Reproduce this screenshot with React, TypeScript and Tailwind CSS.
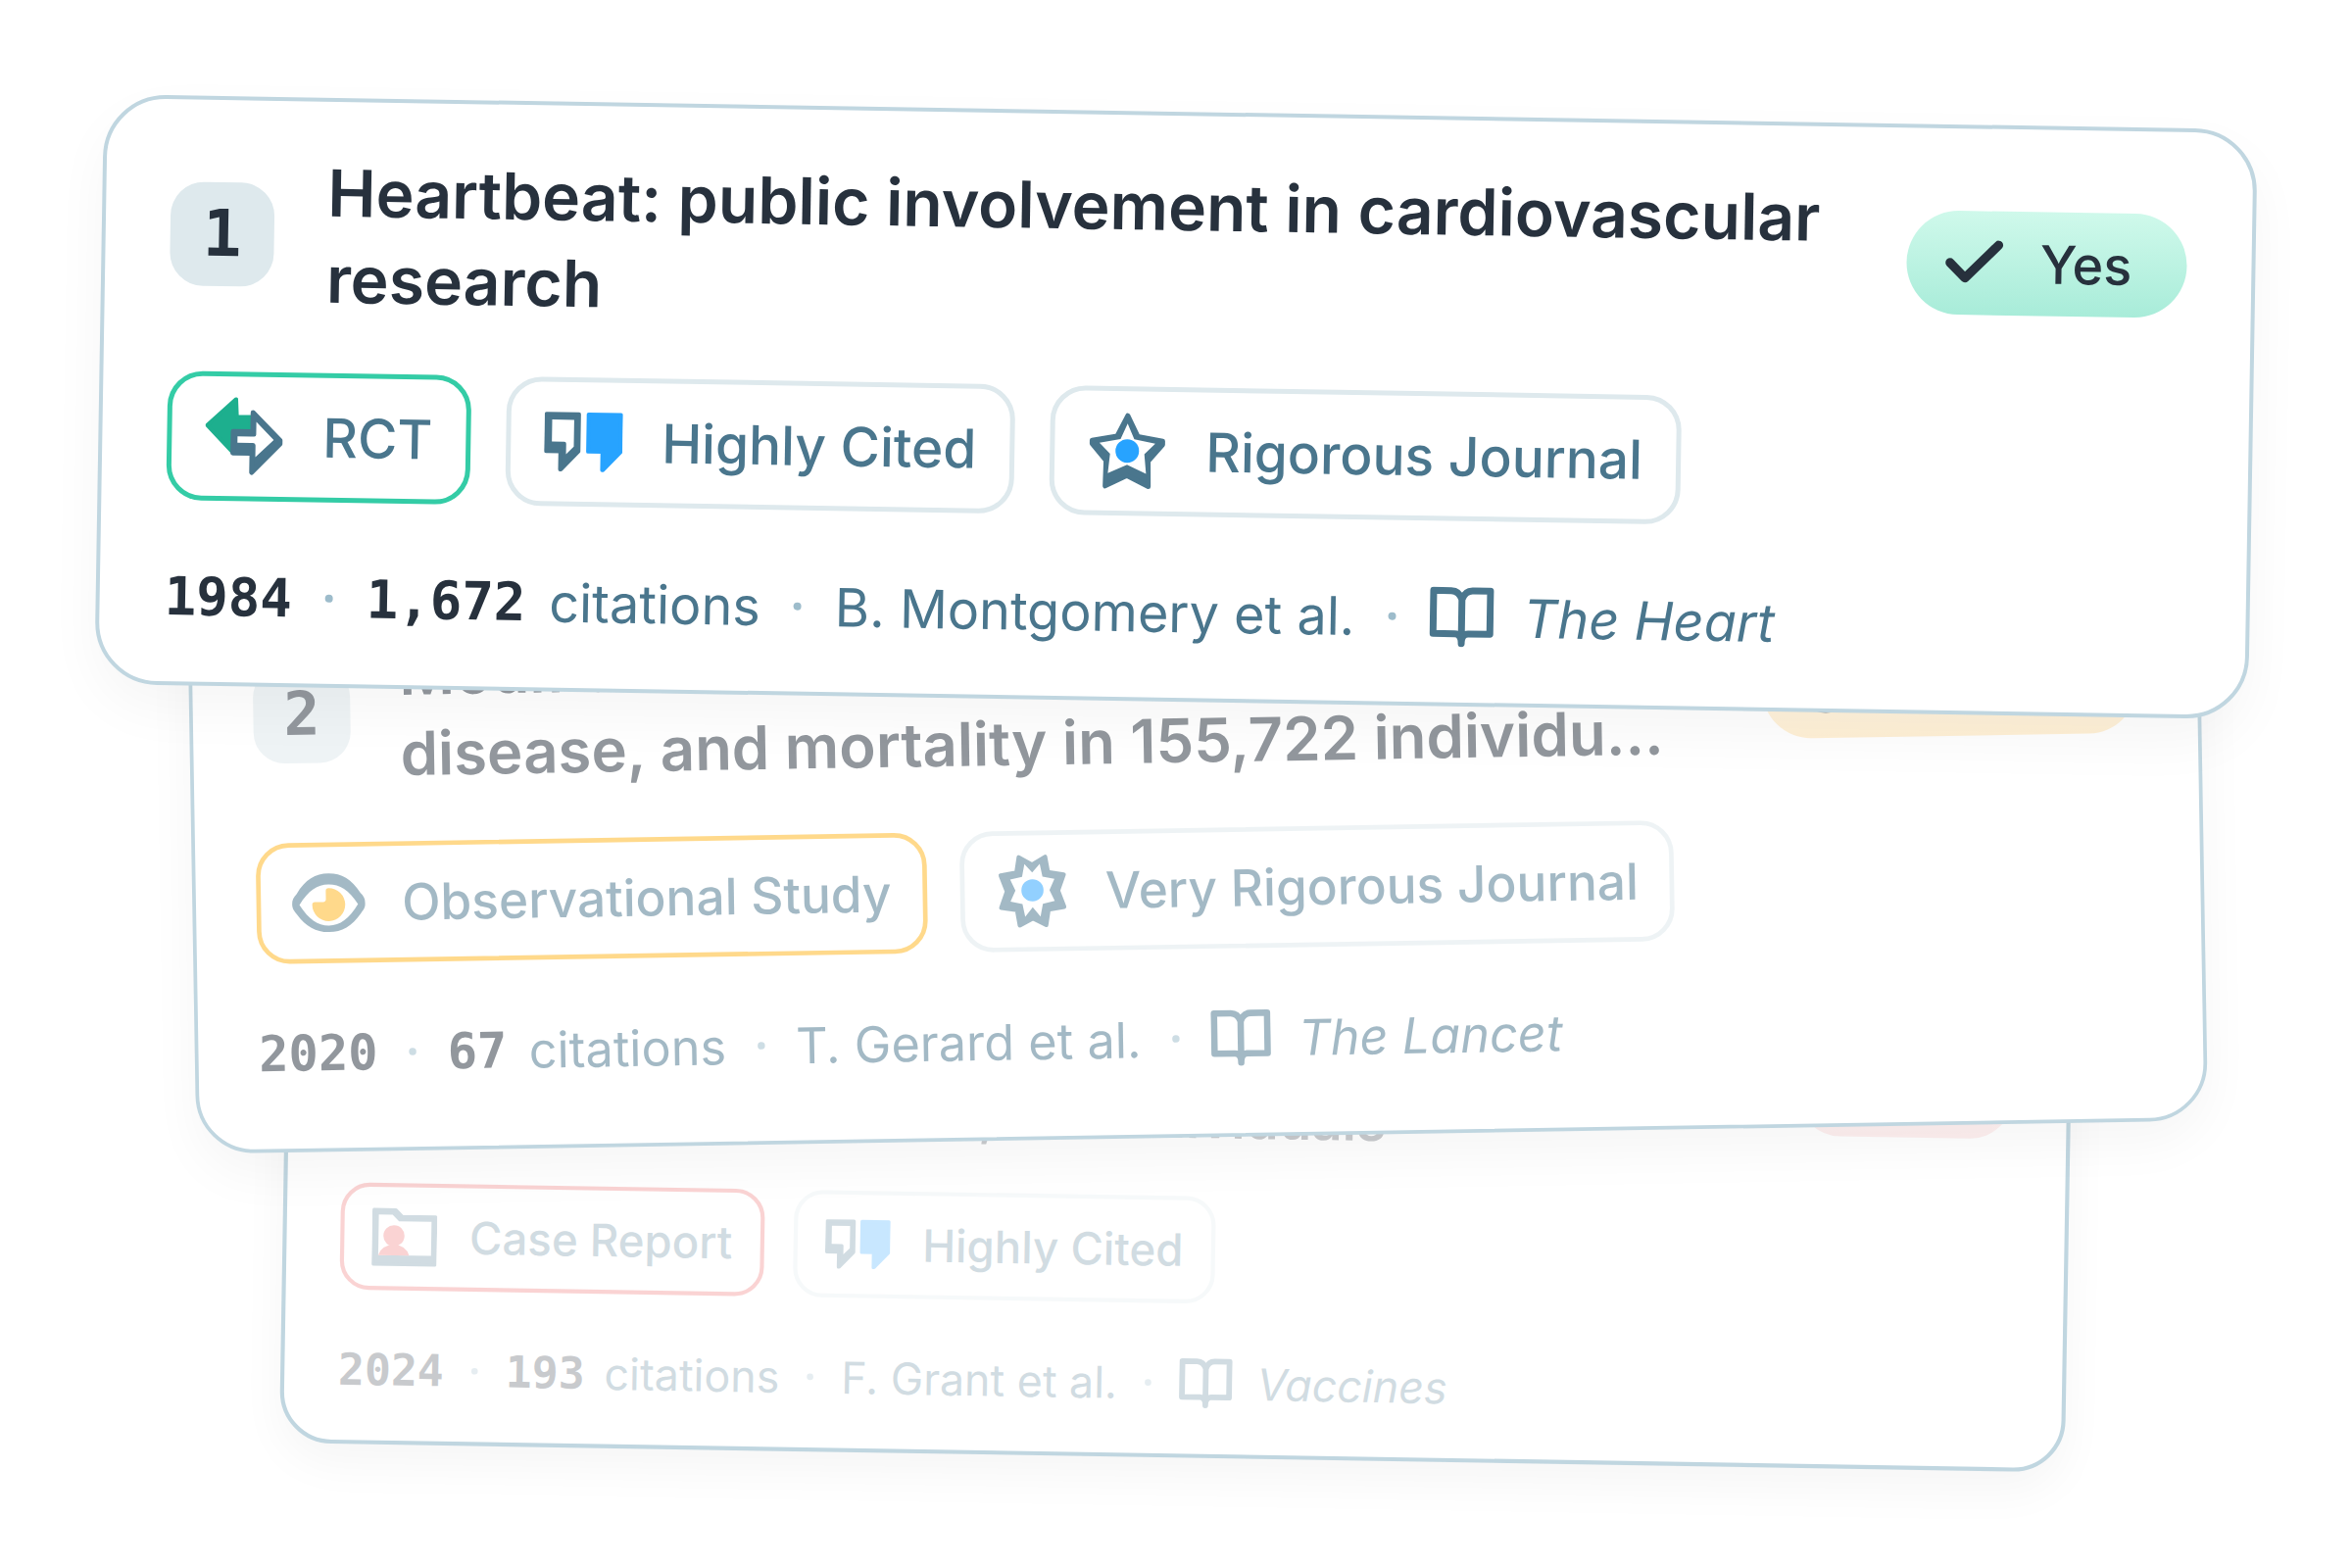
import React from "react";
import { Check, HelpCircle, X } from "lucide-react";

const SLATE = "#4A768D";
const BLUE = "#27A3FF";

function RctIcon() {
  return (
    <svg viewBox="0 0 80 80" className="size-[80px] shrink-0" aria-hidden="true">
      <path
        d="M2 29 L31 2 L32 20 H46 V36 L28 56 Z"
        fill="#1DAF8E"
        stroke="#1DAF8E"
        strokeWidth="4"
        strokeLinejoin="round"
      />
      <path
        d="M28.500 35 H48.500 V15.500 L76.500 43.500 V47 L48 76.500 V57 H28.500 Z"
        fill={SLATE}
        stroke={SLATE}
        strokeWidth="5"
        strokeLinejoin="round"
      />
      <path d="M33 40 H50 Q52 40 52 38 V25 L70 43 L51.500 61 V49 Q51.500 46.500 49 46.500 H33 Z" fill="#fff" />
    </svg>
  );
}

function QuotesIcon() {
  return (
    <svg viewBox="0 0 82 80" className="size-[80px] shrink-0" aria-hidden="true">
      <path
        d="M2 11 H36 V50 L18 69 H17 V50 H2 Z"
        fill={SLATE}
        stroke={SLATE}
        strokeWidth="4"
        strokeLinejoin="round"
      />
      <path d="M8 17 H31 V45 L23 53 V42 Q23 40 21 40 H8 Z" fill="#fff" />
      <path
        d="M46 11 H80 V50 L62 69 H61 V50 H46 Z"
        fill={BLUE}
        stroke={BLUE}
        strokeWidth="4"
        strokeLinejoin="round"
      />
    </svg>
  );
}

function StarIcon() {
  return (
    <svg viewBox="0 0 80 80" className="size-[80px] shrink-0" aria-hidden="true">
      <path
        d="M40 4 L50.500 25 L76 29.500 V33 L61.500 50 L62 76 L40 65 L18 76 L18.500 50 L4 33 V29.500 L29.500 25 Z"
        fill={SLATE}
        stroke={SLATE}
        strokeWidth="5"
        strokeLinejoin="round"
      />
      <path
        d="M40 12 L47 28 L68.500 32 L57.500 43 L59.500 63 L40 54 L20.500 63 L22.500 43 L11.500 32 L33 28 Z"
        fill="#fff"
      />
      <circle cx="40" cy="40" r="12" fill={BLUE} />
    </svg>
  );
}

function BurstIcon() {
  return (
    <svg viewBox="-43 -43 86 86" className="size-[80px] shrink-0" aria-hidden="true">
      <path
        d="M0 -31 L15.500 -40 L18.500 -22 L37 -19 L30 0 L37 19 L18.500 22 L15.500 40 L0 32 L-15.500 40 L-18.500 22 L-37 19 L-30 0 L-37 -19 L-18.500 -22 L-15.500 -40 Z"
        fill={SLATE}
        stroke={SLATE}
        strokeWidth="5"
        strokeLinejoin="round"
      />
      <path
        d="M0 -22 L9 -32 L12 -17 L26 -14 L20 -1 L26 12 L12 15 L9 30 L0 19 L-9 30 L-12 15 L-26 12 L-20 -1 L-26 -14 L-12 -17 L-9 -32 Z"
        fill="#fff"
      />
      <circle cx="0" cy="-1" r="13" fill={BLUE} />
    </svg>
  );
}

function EyeIcon() {
  return (
    <svg viewBox="0 0 80 80" className="size-[80px] shrink-0" aria-hidden="true">
      <path
        d="M0 41 C0 36 2 33 5 30 C15 14 26 8 40 8 C54 8 65 14 75 30 C78 33 80 36 80 41 C80 46 78 48 75 52 C65 66 54 72 40 72 C26 72 15 66 5 52 C2 48 0 46 0 41 Z"
        fill={SLATE}
      />
      <path d="M8 42 C18 26 28 20 40 20 C52 20 62 26 72 42 C62 58 52 65 40 65 C28 65 18 58 8 42 Z" fill="#fff" />
      <path
        d="M40 24 A18 18 0 1 1 22 42 Q22 39 25 39 H34 Q37 39 37 36 V27 Q37 24 40 24 Z"
        fill="#FFB51A"
      />
    </svg>
  );
}

function FolderIcon() {
  return (
    <svg viewBox="0 0 80 80" className="size-[80px] shrink-0" aria-hidden="true">
      <path
        d="M2 7 H29 L37 15 H78 V74 H2 Z"
        fill={SLATE}
        stroke={SLATE}
        strokeWidth="4"
        strokeLinejoin="round"
      />
      <path d="M8 13 H25 L33 21 H73 V63 H8 Z" fill="#fff" />
      <circle cx="27" cy="39" r="13" fill="#EE5555" />
      <path d="M8 63 Q12 50 27 50 Q42 50 46 63 Z" fill="#EE5555" />
    </svg>
  );
}

function BookIcon() {
  return (
    <svg viewBox="0 0 66 62" className="h-[62px] w-[66px] shrink-0" aria-hidden="true">
      <path
        d="M33 58 V13 Q30 4 22 4 H4 V48 H26 Q33 48 33 57 Q33 48 40 48 H62 V4 H44 Q36 4 33 13"
        fill="none"
        stroke={SLATE}
        strokeWidth="7"
        strokeLinejoin="round"
        strokeLinecap="round"
      />
    </svg>
  );
}

function Tag({ icon, label, border }: { icon: React.ReactNode; label: string; border: string }) {
  return (
    <li
      className={`flex h-[132px] items-center gap-[40px] whitespace-nowrap rounded-[36px] border-[5px] px-[34px] text-[55px] font-medium text-[#4A768D] ${border}`}
    >
      {icon}
      {label}
    </li>
  );
}

function Dot() {
  return <span className="mx-[34px] size-[8px] shrink-0 rounded-full bg-[#9DBCCB]" aria-hidden="true" />;
}

interface Paper {
  rank: number;
  title: string;
  verdict: React.ReactNode;
  tags: React.ReactNode;
  year: string;
  citations: string;
  authors: string;
  journal: string;
  cardClass: string;
  contentClass: string;
}

function PaperCard(p: Paper) {
  return (
    <article
      className={`relative w-full rounded-[64px] border-[#C0D6E0] bg-white shadow-[0_24px_56px_rgba(0,0,0,0.04)] ${p.cardClass}`}
    >
      <div className={`px-[66px] pt-[49px] ${p.contentClass}`}>
        <header className="flex items-center">
          <span className="mr-[54px] flex size-[106px] shrink-0 items-center justify-center rounded-[34px] bg-[#DEE9ED] font-['DejaVu_Sans_Mono'] text-[66px] font-bold leading-none">
            {p.rank}
          </span>
          <h2 className="min-w-0 flex-1 whitespace-pre-line text-[66px] font-semibold leading-[88px]">{p.title}</h2>
          {p.verdict}
        </header>
        <ul className="mt-[52px] flex gap-[36px]">{p.tags}</ul>
        <div className="mt-[58px] flex h-[80px] items-center whitespace-nowrap text-[54px] text-[#4A768D]">
          <span className="font-['DejaVu_Sans_Mono'] font-bold text-[#27313D]">{p.year}</span>
          <Dot />
          <span className="mr-[24px] font-['DejaVu_Sans_Mono'] font-bold text-[#27313D]">{p.citations}</span>
          <span>citations</span>
          <Dot />
          <span>{p.authors}</span>
          <Dot />
          <BookIcon />
          <cite className="ml-[30px] italic">{p.journal}</cite>
        </div>
      </div>
    </article>
  );
}

function Verdict({ icon, label, tone }: { icon: React.ReactNode; label: string; tone: string }) {
  return (
    <span
      className={`ml-[40px] flex h-[106px] shrink-0 items-center gap-[30px] rounded-full pl-[32px] pr-[56px] text-[54px] font-medium ${tone}`}
    >
      {icon}
      {label}
    </span>
  );
}

export default function App() {
  return (
    <main className="isolate flex min-h-screen flex-col items-center overflow-hidden bg-white px-[101px] pt-[114px] font-['Inter',sans-serif] text-[#27313D]">
      <PaperCard
        rank={1}
        title="Heartbeat: public involvement in cardiovascular research"
        verdict={
          <Verdict
            icon={<Check className="size-[74px]" strokeWidth={3} aria-hidden="true" />}
            label="Yes"
            tone="bg-linear-to-b from-[#CFF9EB] to-[#A8ECD9]"
          />
        }
        tags={
          <>
            <Tag icon={<RctIcon />} label="RCT" border="border-[#34CCA6]" />
            <Tag icon={<QuotesIcon />} label="Highly Cited" border="border-[#DEE9ED]" />
            <Tag icon={<StarIcon />} label="Rigorous Journal" border="border-[#DEE9ED]" />
          </>
        }
        year="1984"
        citations="1,672"
        authors="B. Montgomery et al."
        journal="The Heart"
        cardClass="z-30 border-4 rotate-[0.94deg]"
        contentClass="pb-[47px]"
      />
      <PaperCard
        rank={2}
        title="Modifiable risk factors, cardiovascular disease, and mortality in 155,722 individu…"
        verdict={
          <Verdict
            icon={<HelpCircle className="size-[74px] p-[9px]" strokeWidth={2} aria-hidden="true" />}
            label="Possibly"
            tone="bg-linear-to-b from-[#FFF1D2] to-[#FFE3AE]"
          />
        }
        tags={
          <>
            <Tag icon={<EyeIcon />} label="Observational Study" border="border-[#FFB51A]" />
            <Tag icon={<BurstIcon />} label="Very Rigorous Journal" border="border-[#DEE9ED]" />
          </>
        }
        year="2020"
        citations="67"
        authors="T. Gerard et al."
        journal="The Lancet"
        cardClass="z-20 border-4 -mt-[154px] translate-x-[22px] -rotate-[0.95deg] scale-[0.934]"
        contentClass="pb-[64px] opacity-50"
      />
      <PaperCard
        rank={3}
        title={"Vaccine safety, early cardiovascular disease,\nand mortality in 155,722 individuals"}
        verdict={
          <Verdict
            icon={<X className="size-[74px]" strokeWidth={3} aria-hidden="true" />}
            label="No"
            tone="bg-linear-to-b from-[#FCD5D5] to-[#F8BEBE]"
          />
        }
        tags={
          <>
            <Tag icon={<FolderIcon />} label="Case Report" border="border-[#EE5555]" />
            <Tag icon={<QuotesIcon />} label="Highly Cited" border="border-[#DEE9ED]" />
          </>
        }
        year="2024"
        citations="193"
        authors="F. Grant et al."
        journal="Vaccines"
        cardClass="z-10 border-5 -mt-[246px] rotate-[0.95deg] scale-[0.829]"
        contentClass="pb-[47px] opacity-25"
      />
    </main>
  );
}
